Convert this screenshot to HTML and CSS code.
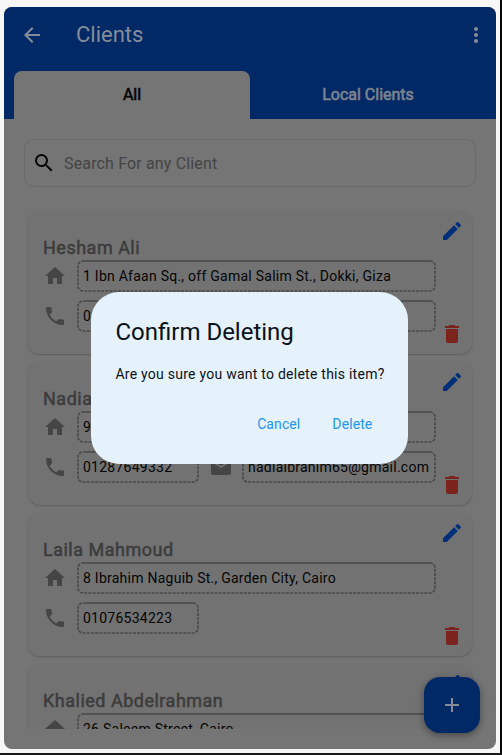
FILE: index.html
```
<!DOCTYPE html>
<html lang="en">
<head>
<meta charset="utf-8">
<title>Clients</title>
<link rel="stylesheet" href="styles.css">
</head>
<body>
<svg class="defs" aria-hidden="true">
  <symbol id="home" viewBox="0 0 24 24"><path d="M10 20v-6h4v6h5v-8h3L12 3 2 12h3v8z"/></symbol>
  <symbol id="phone" viewBox="0 0 24 24"><path d="M6.62 10.79c1.44 2.83 3.76 5.14 6.59 6.59l2.2-2.2c.27-.27.67-.36 1.02-.24 1.12.37 2.33.57 3.57.57.55 0 1 .45 1 1V20c0 .55-.45 1-1 1C10.61 21 3 13.39 3 4c0-.55.45-1 1-1h3.5c.55 0 1 .45 1 1 0 1.25.2 2.45.57 3.57.11.35.03.74-.25 1.02l-2.2 2.2z"/></symbol>
  <symbol id="mail" viewBox="0 0 24 24"><path d="M20 4H4c-1.1 0-2 .9-2 2v12c0 1.1.9 2 2 2h16c1.1 0 2-.9 2-2V6c0-1.1-.9-2-2-2zm0 4-8 5-8-5V6l8 5 8-5z"/></symbol>
  <symbol id="edit" viewBox="0 0 24 24"><path d="M3 17.25V21h3.75L17.81 9.94l-3.75-3.75zM20.71 7.04a1 1 0 0 0 0-1.41l-2.34-2.34a1 1 0 0 0-1.41 0l-1.83 1.83 3.75 3.75z"/></symbol>
  <symbol id="trash" viewBox="0 0 24 24"><path d="M6 19c0 1.1.9 2 2 2h8c1.1 0 2-.9 2-2V7H6zM19 4h-3.5l-1-1h-5l-1 1H5v2h14z"/></symbol>
  <symbol id="wide" viewBox="0 0 359 32"><path class="solid" d="M6 1H353"/><path class="dash" d="M353 1A5 5 0 0 1 358 6V26A5 5 0 0 1 353 31H6A5 5 0 0 1 1 26V6A5 5 0 0 1 6 1"/></symbol>
  <symbol id="short" viewBox="0 0 122 32"><path class="solid" d="M6 1H116"/><path class="dash" d="M116 1A5 5 0 0 1 121 6V26A5 5 0 0 1 116 31H6A5 5 0 0 1 1 26V6A5 5 0 0 1 6 1"/></symbol>
  <symbol id="medium" viewBox="0 0 194 32"><path class="solid" d="M6 1H188"/><path class="dash" d="M188 1A5 5 0 0 1 193 6V26A5 5 0 0 1 188 31H6A5 5 0 0 1 1 26V6A5 5 0 0 1 6 1"/></symbol>
</svg>
<div class="screen">
  <header class="header">
    <div class="appbar">
      <svg class="back" viewBox="0 0 24 24"><path d="M20 11H7.83l5.59-5.59L12 4l-8 8 8 8 1.41-1.41L7.83 13H20z"/></svg>
      <h1 class="title">Clients</h1>
      <svg class="more" viewBox="0 0 24 24"><path d="M12 8c1.100 0 2-.9 2-2s-.9-2-2-2-2 .9-2 2 .9 2 2 2zm0 2c-1.100 0-2 .9-2 2s.9 2 2 2 2-.9 2-2-.9-2-2-2zm0 6c-1.100 0-2 .9-2 2s.9 2 2 2 2-.9 2-2-.9-2-2-2z"/></svg>
    </div>
    <nav class="tabs"><div class="tab active">All</div><div class="tab">Local Clients</div></nav>
  </header>
  <div class="search">
    <svg viewBox="0 0 24 24"><path d="M15.500 14h-.79l-.28-.27A6.470 6.470 0 0 0 16 9.500 6.500 6.500 0 1 0 9.500 16c1.610 0 3.090-.59 4.230-1.570l.27.28v.79l5 4.990L20.490 19zm-6 0C7.010 14 5 11.990 5 9.500S7.010 5 9.500 5 14 7.010 14 9.500 11.990 14 9.500 14z"/></svg>
    <span>Search For any Client</span>
  </div>
  <main class="list">
    <article class="card">
      <div class="info">
        <h2>Hesham Ali</h2>
        <div class="row"><svg class="icon"><use href="#home"/></svg><div class="field wide"><svg><use href="#wide"/></svg><span>1 Ibn Afaan Sq., off Gamal Salim St., Dokki, Giza</span></div></div>
        <div class="row"><svg class="icon"><use href="#phone"/></svg><div class="field short"><svg><use href="#short"/></svg><span>0</span></div><svg class="icon mail"><use href="#mail"/></svg><div class="field medium"><svg><use href="#medium"/></svg></div></div>
      </div>
      <div class="actions"><svg class="edit"><use href="#edit"/></svg><svg class="trash"><use href="#trash"/></svg></div>
    </article>
    <article class="card">
      <div class="info">
        <h2>Nadia</h2>
        <div class="row"><svg class="icon"><use href="#home"/></svg><div class="field wide"><svg><use href="#wide"/></svg><span>9</span></div></div>
        <div class="row"><svg class="icon"><use href="#phone"/></svg><div class="field short"><svg><use href="#short"/></svg><span>01287649332</span></div><svg class="icon mail"><use href="#mail"/></svg><div class="field medium"><svg><use href="#medium"/></svg><span>nadiaibrahim65@gmail.com</span></div></div>
      </div>
      <div class="actions"><svg class="edit"><use href="#edit"/></svg><svg class="trash"><use href="#trash"/></svg></div>
    </article>
    <article class="card">
      <div class="info">
        <h2>Laila Mahmoud</h2>
        <div class="row"><svg class="icon"><use href="#home"/></svg><div class="field wide"><svg><use href="#wide"/></svg><span>8 Ibrahim Naguib St., Garden City, Cairo</span></div></div>
        <div class="row"><svg class="icon"><use href="#phone"/></svg><div class="field short"><svg><use href="#short"/></svg><span>01076534223</span></div></div>
      </div>
      <div class="actions"><svg class="edit"><use href="#edit"/></svg><svg class="trash"><use href="#trash"/></svg></div>
    </article>
    <article class="card">
      <div class="info">
        <h2>Khalied Abdelrahman</h2>
        <div class="row"><svg class="icon"><use href="#home"/></svg><div class="field wide"><svg><use href="#wide"/></svg><span>26 Saleem Street, Cairo</span></div></div>
      </div>
      <div class="actions"><svg class="edit"><use href="#edit"/></svg></div>
    </article>
  </main>
  <button class="fab" aria-label="Add client"><svg viewBox="0 0 24 24"><path d="M19 13h-6v6h-2v-6H5v-2h6V5h2v6h6z"/></svg></button>
  <section class="dialog" role="dialog">
    <h2>Confirm Deleting</h2>
    <p>Are you sure you want to delete this item?</p>
    <div class="buttons"><button class="cancel">Cancel</button><button class="delete">Delete</button></div>
  </section>
</div>
</body>
</html>
```
FILE: styles.css
```
* { box-sizing: border-box; }
body {
  margin: 0; width: 502px; height: 755px; overflow: hidden;
  padding: 7px 4px 4px; background: #f7f7f7;
  border-right: 2px solid #080808; border-bottom: 2px solid #191919;
  font-family: Roboto, "Liberation Sans", sans-serif;
}
h1, h2, p { margin: 0; font-weight: 400; }
svg { display: block; fill: currentColor; flex: none; }
.defs { position: absolute; width: 0; height: 0; }
.screen {
  position: relative; width: 492px; height: 742px; overflow: hidden;
  border-radius: 8px; background: #757575;
  display: flex; flex-direction: column;
}
.header { height: 112px; background: #002966; color: #868d99; padding: 0 10px; flex: none; }
.appbar { height: 64px; display: flex; align-items: center; padding: 0 0 8px 6px; }
.back, .more { width: 24px; height: 24px; }
.title { font-size: 22px; margin-left: 32px; flex: 1; line-height: 28px; }
.more { margin-right: -2px; }
.tabs { display: flex; height: 48px; }
.tab {
  flex: 1; display: flex; align-items: center; justify-content: center; padding-bottom: 2px;
  font-size: 16px; font-weight: 400; color: #7d8490; -webkit-text-stroke: .6px currentColor;
}
.tab.active { background: #757575; color: #050505; border-radius: 8px 8px 0 0; }
.search {
  margin: 20px 20px 0; height: 48px; flex: none; border: 1px solid #696969; border-radius: 10px;
  display: flex; align-items: center; padding-left: 7px; gap: 8px;
  color: #444; font-size: 16px; letter-spacing: .15px;
}
.search svg { width: 24px; height: 24px; color: #050505; }
.list { margin: 20px 20px 0; padding: 4px; flex: none; height: 522px; overflow: hidden; display: flex; flex-direction: column; gap: 8px; }
.card {
  height: 143px; flex: none; border-radius: 12px; background: #727272;
  box-shadow: 0 1px 1px #626262, 0 1px 3px #6c6c6c;
  display: flex; padding: 8px 8px 8px 15px;
}
.info { width: 393px; padding-top: 18px; }
.info h2 { font-size: 18px; line-height: 22px; margin-bottom: 1px; letter-spacing: .5px; color: #3c3c3c; -webkit-text-stroke: .5px #3c3c3c; white-space: nowrap; }
.row { display: flex; align-items: center; height: 32px; margin-bottom: 8px; }
.icon { width: 24px; height: 24px; color: #454545; margin-right: 10px; }
.mail { margin: 0 9px 0 10px; }
.field { position: relative; height: 32px; flex: none; padding-left: 6px; }
.field svg { position: absolute; left: 0; top: 0; width: 100%; height: 100%; fill: none; stroke: #484848; stroke-width: 1.6; }
.dash { stroke-dasharray: 3 1.2; }
.wide { width: 359px; }
.short { width: 122px; }
.medium { width: 194px; }
.field span { display: block; font-size: 14px; line-height: 32px; letter-spacing: .25px; color: #050505; white-space: nowrap; }
.actions { flex: 1; display: flex; flex-direction: column; justify-content: space-between; align-items: flex-end; }
.actions svg { width: 24px; height: 24px; }
.edit { color: #002f7a; }
.trash { color: #7b231d; }
.fab {
  position: absolute; right: 16px; bottom: 16px; width: 56px; height: 56px; padding: 16px;
  border: 0; border-radius: 16px; background: #002966; color: #868d99;
  box-shadow: 0 3px 6px #0004, 0 1px 10px #0002;
}
.fab svg { width: 24px; height: 24px; }
.dialog {
  position: absolute; left: 87.400px; top: 285px; width: 317px; height: 172px;
  border-radius: 28px; background: #e5f2fc; padding: 24px; color: #0b1118;
}
.dialog h2 { font-size: 24px; line-height: 32px; white-space: nowrap; }
.dialog p { margin-top: 16px; font-size: 14px; line-height: 20px; letter-spacing: .25px; white-space: nowrap; }
.buttons { display: flex; justify-content: flex-end; gap: 8px; margin-top: 20px; }
.buttons button { border: 0; background: none; padding: 0 12px; height: 40px; font: 400 14px/40px Roboto, sans-serif; color: #2196f3; letter-spacing: .1px; }
```
